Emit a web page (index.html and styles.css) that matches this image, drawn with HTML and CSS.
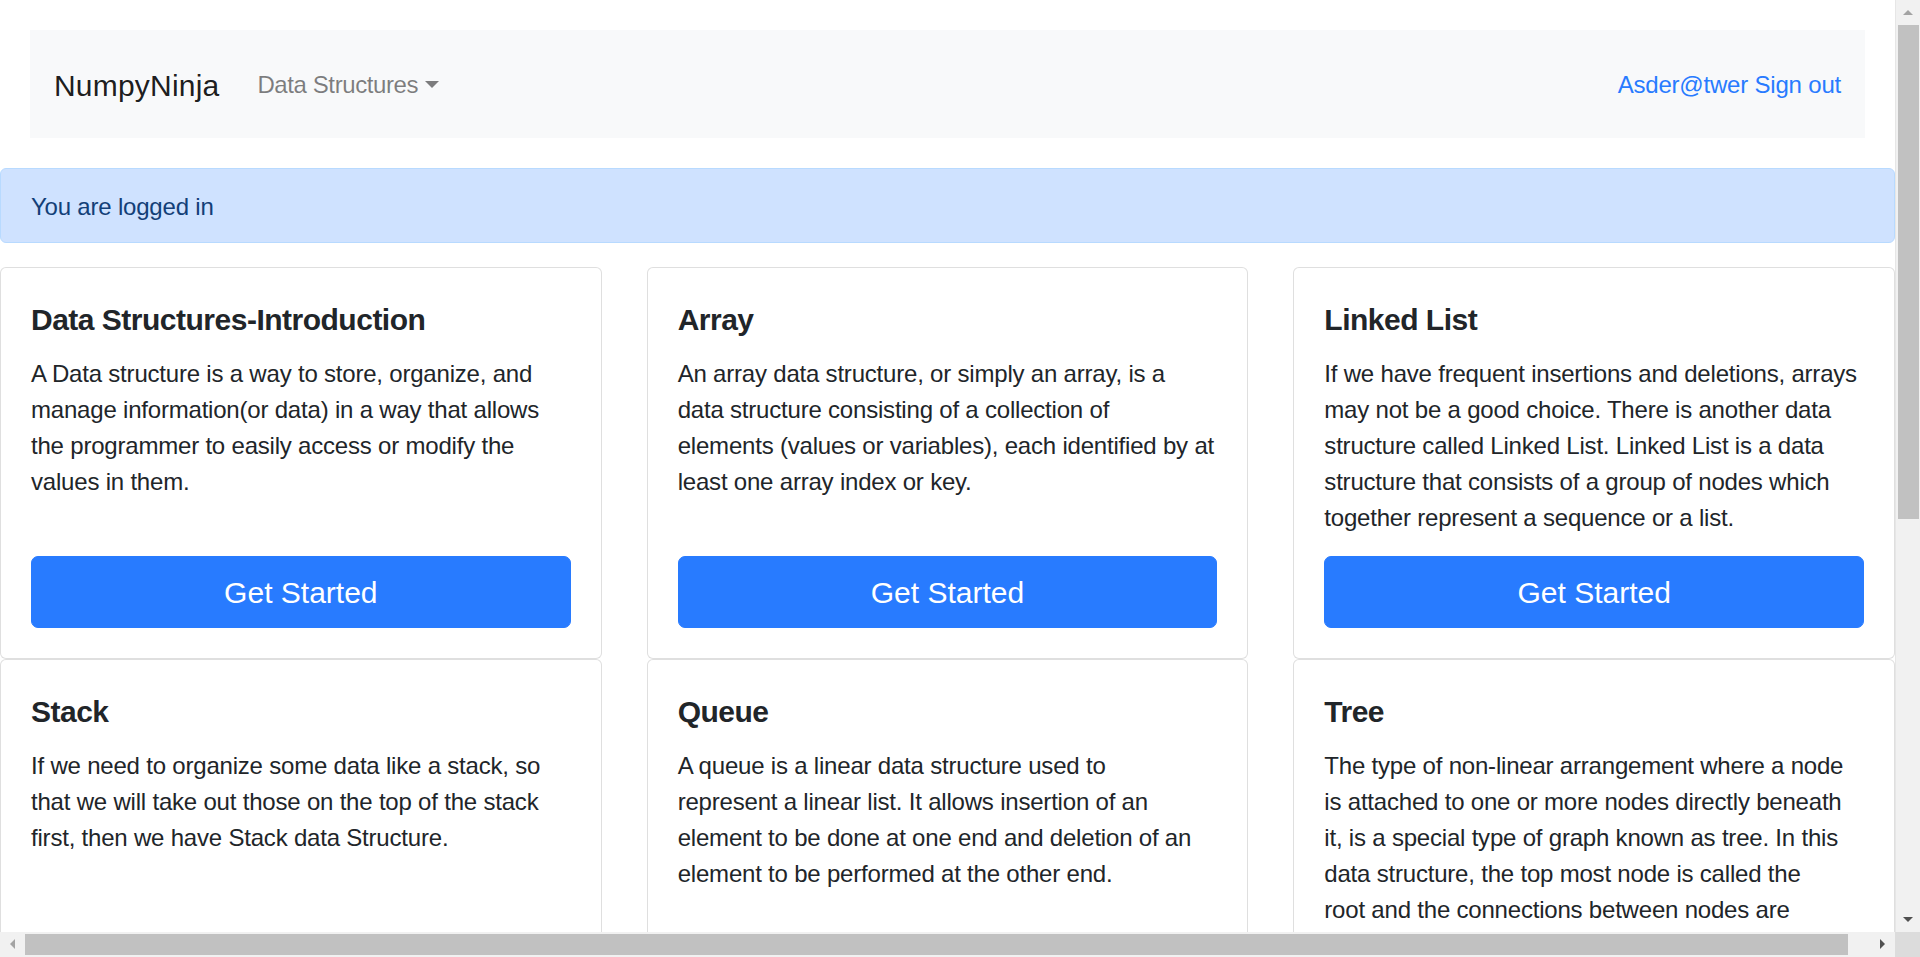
FILE: index.html
```html
<!DOCTYPE html>
<html lang="en">
<head>
<meta charset="utf-8">
<title>NumpyNinja</title>
<link rel="stylesheet" href="styles.css">
</head>
<body>
<div class="page">
  <nav class="navbar">
    <a class="brand" href="#">NumpyNinja</a>
    <a class="nav-link dropdown-toggle" href="#">Data Structures</a>
    <div class="nav-right"><a class="user-link" href="#">Asder@twer</a> <a class="user-link" href="#">Sign out</a></div>
  </nav>

  <div class="alert">You are logged in</div>

  <div class="cards">
    <div class="card">
      <div class="card-body">
        <h5 class="card-title">Data Structures-Introduction</h5>
        <p class="card-text">A Data structure is a way to store, organize, and<br>manage information(or data) in a way that allows<br>the programmer to easily access or modify the<br>values in them.</p>
        <a class="btn" href="#">Get Started</a>
      </div>
    </div>
    <div class="card">
      <div class="card-body">
        <h5 class="card-title">Array</h5>
        <p class="card-text">An array data structure, or simply an array, is a<br>data structure consisting of a collection of<br>elements (values or variables), each identified by at<br>least one array index or key.</p>
        <a class="btn" href="#">Get Started</a>
      </div>
    </div>
    <div class="card">
      <div class="card-body">
        <h5 class="card-title">Linked List</h5>
        <p class="card-text">If we have frequent insertions and deletions, arrays<br>may not be a good choice. There is another data<br>structure called Linked List. Linked List is a data<br>structure that consists of a group of nodes which<br>together represent a sequence or a list.</p>
        <a class="btn" href="#">Get Started</a>
      </div>
    </div>
    <div class="card">
      <div class="card-body">
        <h5 class="card-title">Stack</h5>
        <p class="card-text">If we need to organize some data like a stack, so<br>that we will take out those on the top of the stack<br>first, then we have Stack data Structure.</p>
        <a class="btn" href="#">Get Started</a>
      </div>
    </div>
    <div class="card">
      <div class="card-body">
        <h5 class="card-title">Queue</h5>
        <p class="card-text">A queue is a linear data structure used to<br>represent a linear list. It allows insertion of an<br>element to be done at one end and deletion of an<br>element to be performed at the other end.</p>
        <a class="btn" href="#">Get Started</a>
      </div>
    </div>
    <div class="card">
      <div class="card-body">
        <h5 class="card-title">Tree</h5>
        <p class="card-text">The type of non-linear arrangement where a node<br>is attached to one or more nodes directly beneath<br>it, is a special type of graph known as tree. In this<br>data structure, the top most node is called the<br>root and the connections between nodes are<br>called edges.</p>
        <a class="btn" href="#">Get Started</a>
      </div>
    </div>
  </div>
</div>

<div class="vscroll">
  <span class="arrow arrow-up"></span>
  <span class="vthumb"></span>
  <span class="arrow arrow-down"></span>
</div>
<div class="hscroll">
  <span class="arrow arrow-left"></span>
  <span class="hthumb"></span>
  <span class="arrow arrow-right"></span>
</div>
<div class="scroll-corner"></div>
</body>
</html>
```

FILE: styles.css
```css
html, body {
  margin: 0;
  padding: 0;
  overflow: hidden;
  background: #fff;
}

body {
  font-family: "Liberation Sans", Arial, sans-serif;
  font-size: 24px;
  line-height: 36px;
  color: #212529;
  letter-spacing: -0.2px;
}

.page {
  width: 1895px;
}

/* Navbar */
.navbar {
  display: flex;
  align-items: center;
  box-sizing: border-box;
  height: 108px;
  margin: 30px 30px 30px 30px;
  padding: 25px 24px 23px;
  background: #f8f9fa;
}

.brand {
  font-size: 30px;
  line-height: 45px;
  padding: 7.5px 0;
  margin-right: 26px;
  color: rgba(0, 0, 0, 0.9);
  text-decoration: none;
  letter-spacing: 0.2px;
}

.nav-link {
  padding: 12px;
  color: rgba(0, 0, 0, 0.5);
  text-decoration: none;
  letter-spacing: -0.4px;
}

.dropdown-toggle::after {
  content: "";
  display: inline-block;
  margin-left: 7px;
  vertical-align: 5px;
  border-top: 7.2px solid;
  border-right: 7.2px solid transparent;
  border-left: 7.2px solid transparent;
}

.nav-right {
  margin-left: auto;
}

.user-link {
  color: #287bff;
  text-decoration: none;
}

/* Alert */
.alert {
  padding: 19.5px 30px 17.5px;
  margin-bottom: 24px;
  border: 1px solid #b8daff;
  border-radius: 6px;
  background: #cfe2ff;
  color: #133f78;
}

/* Cards */
.cards {
  display: grid;
  grid-template-columns: repeat(3, 1fr);
  column-gap: 45px;
}

.card {
  display: flex;
  flex-direction: column;
  border: 1px solid rgba(0, 0, 0, 0.125);
  border-radius: 6px;
  background: #fff;
}

.card-body {
  flex: 1;
  display: flex;
  flex-direction: column;
  padding: 30px;
}

.card-title {
  margin: 0 0 18px;
  padding-top: 4px;
  font-size: 30px;
  line-height: 36px;
  font-weight: 700;
  letter-spacing: -0.5px;
  color: #212529;
}

.card-text {
  margin: 0 0 20px;
  white-space: nowrap;
}

.btn {
  display: block;
  margin-top: auto;
  padding: 12.5px 24px;
  border: 1px solid #287bff;
  border-radius: 7px;
  background: #287bff;
  color: #fff;
  font-size: 30px;
  line-height: 45px;
  text-align: center;
  text-decoration: none;
  letter-spacing: 0;
}

/* Browser scrollbars (drawn over the page) */
.vscroll {
  position: fixed;
  top: 0;
  right: 0;
  width: 25px;
  height: 932px;
  box-sizing: border-box;
  background: #f1f1f1;
  border-left: 1px solid #e6e6e6;
}

.vthumb {
  position: absolute;
  top: 25px;
  left: 2px;
  width: 21px;
  height: 494px;
  background: #c1c1c1;
}

.hscroll {
  position: fixed;
  left: 0;
  bottom: 0;
  width: 1895px;
  height: 25px;
  background: #f1f1f1;
}

.hthumb {
  position: absolute;
  top: 2px;
  left: 25px;
  width: 1823px;
  height: 21px;
  background: #c1c1c1;
}

.scroll-corner {
  position: fixed;
  right: 0;
  bottom: 0;
  width: 25px;
  height: 25px;
  background: #dcdcdc;
}

.arrow {
  position: absolute;
  width: 0;
  height: 0;
}

.arrow-up {
  top: 10px;
  left: 7px;
  border-bottom: 5px solid #a3a3a3;
  border-left: 5px solid transparent;
  border-right: 5px solid transparent;
}

.arrow-down {
  bottom: 10px;
  left: 7px;
  border-top: 5px solid #505050;
  border-left: 5px solid transparent;
  border-right: 5px solid transparent;
}

.arrow-left {
  top: 7px;
  left: 10px;
  border-right: 5px solid #a3a3a3;
  border-top: 5px solid transparent;
  border-bottom: 5px solid transparent;
}

.arrow-right {
  top: 7px;
  right: 10px;
  border-left: 5px solid #505050;
  border-top: 5px solid transparent;
  border-bottom: 5px solid transparent;
}
```
